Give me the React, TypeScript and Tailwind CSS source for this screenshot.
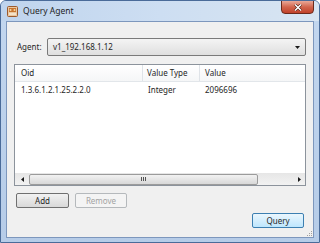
import React from "react";

const font = { fontFamily: '"Noto Sans", "Open Sans", sans-serif' };

function TitleIcon() {
    return (
        <svg width="11" height="11" viewBox="0 0 11 11" className="mt-[5px] ml-[6px]">
            <rect x="0.5" y="0.5" width="10" height="10" rx="1" fill="#e9c7a0" stroke="#9c5a2c" />
            <rect x="2" y="2" width="7" height="4" fill="#c8742e" />
            <rect x="2" y="7" width="7" height="2" fill="#f4e2c8" />
            <circle cx="3.5" cy="4" r="1" fill="#f7d9a8" />
            <circle cx="7.5" cy="4" r="1" fill="#f7d9a8" />
        </svg>
    );
}

function Arrow({dir}: {dir: "left" | "right" | "down"}) {
    if (dir === "down") {
        return (
            <svg width="5" height="3" viewBox="0 0 5 3">
                <path d="M0 0H5L2.5 3Z" fill="#1a1a1a" />
            </svg>
        );
    }
    return (
        <svg width="3" height="5" viewBox="0 0 3 5">
            <path d={dir === "left" ? "M3 0V5L0 2.5Z" : "M0 0V5L3 2.5Z"} fill="#1a1a1a" />
        </svg>
    );
}

export default function App() {
    return (
        <div style={font} className="w-[320px] h-[243px] flex flex-col overflow-hidden rounded-t-[6px] border border-[#4a6b99] bg-gradient-to-b from-[#c3d7ef] to-[#b6cce8] text-[8px] leading-none text-[#262626]">
            <div className="h-[20px] flex items-start bg-gradient-to-r from-[#bfd4ed] via-[#cddef2] to-[#d8e5f2]">
                <TitleIcon />
                <span className="ml-[5px] mt-[6px] text-[8.5px] text-[#1e1e1e]">Query Agent</span>
                <div className="ml-auto mr-[5px] w-[33px] h-[14px] -mt-[1px] rounded-b-[4px] border border-[#6b2a1c] bg-gradient-to-b from-[#e9a898] via-[#d2654d] to-[#c1412a] flex items-center justify-center">
                    <svg width="8" height="7" viewBox="0 0 8 7">
                        <path d="M1 0.5L7 6.5M7 0.5L1 6.5" stroke="#4a1a10" strokeWidth="2.6" />
                        <path d="M1 0.5L7 6.5M7 0.5L1 6.5" stroke="#ffffff" strokeWidth="1.5" />
                    </svg>
                </div>
            </div>

            <div className="mx-[5px] mb-[4px] flex-1 border border-[#7d97bd] bg-[#f0f0f0] flex flex-col px-[7px] pt-[16px] relative">
                <div className="h-[18px] flex items-center">
                    <span className="ml-[3px] w-[30px]">Agent:</span>
                    <div className="flex-1 h-[18px] rounded-[2px] border border-[#7a7a7a] bg-gradient-to-b from-[#f4f4f4] to-[#dfdfdf] flex items-center pl-[5px] pr-[5px]">
                        <span>v1_192.168.1.12</span>
                        <span className="ml-auto flex"><Arrow dir="down" /></span>
                    </div>
                </div>

                <div className="mt-[8px] h-[122px] border border-[#8c939c] bg-white flex flex-col">
                    <div className="h-[17px] flex items-center border-b border-[#e2e6ea] bg-gradient-to-b from-white to-[#f5f6f7]">
                        <div className="w-[128px] h-full flex items-center pl-[6px] border-r border-[#dfe3e8]">Oid</div>
                        <div className="w-[57px] h-full flex items-center pl-[4px] border-r border-[#dfe3e8]">Value Type</div>
                        <div className="flex-1 h-full flex items-center pl-[5px]">Value</div>
                    </div>
                    <div className="h-[15px] flex items-center">
                        <div className="w-[128px] pl-[6px]">1.3.6.1.2.1.25.2.2.0</div>
                        <div className="w-[57px] pl-[5px]">Integer</div>
                        <div className="flex-1 pl-[5px]">2096696</div>
                    </div>
                    <div className="flex-1" />
                    <div className="h-[12px] flex items-center bg-gradient-to-b from-[#e6e6e6] to-[#f2f2f2]">
                        <div className="w-[14px] flex justify-center"><Arrow dir="left" /></div>
                        <div className="w-[229px] h-[11px] rounded-[2px] border border-[#9b9b9b] bg-gradient-to-b from-[#f2f2f2] to-[#d8d8d8] flex items-center justify-center">
                            <div className="flex gap-[1px]">
                                <div className="w-[1px] h-[4px] bg-[#555]" />
                                <div className="w-[1px] h-[4px] bg-[#555]" />
                                <div className="w-[1px] h-[4px] bg-[#555]" />
                            </div>
                        </div>
                        <div className="flex-1" />
                        <div className="w-[12px] flex justify-center"><Arrow dir="right" /></div>
                    </div>
                </div>

                <div className="mt-[7px] ml-[2px] flex gap-[6px]">
                    <button className="w-[53px] h-[15px] rounded-[2px] border border-[#707070] bg-gradient-to-b from-[#f2f2f2] to-[#d9d9d9] text-[8px] leading-none">Add</button>
                    <button className="w-[52px] h-[15px] rounded-[2px] border border-[#b5b9bc] bg-[#f4f4f4] text-[8px] leading-none text-[#a3a3a3]">Remove</button>
                </div>

                <div className="mt-[5px] mr-[2px] flex justify-end">
                    <button className="w-[52px] h-[15px] rounded-[2px] border border-[#3c7fb1] bg-gradient-to-b from-[#eaf6fd] to-[#bee6fd] text-[8px] leading-none">Query</button>
                </div>

                <div className="absolute right-[1px] bottom-[1px] grid grid-cols-3 gap-[1px]">
                    <div className="w-[1px] h-[1px]" />
                    <div className="w-[1px] h-[1px]" />
                    <div className="w-[1px] h-[1px] bg-[#a0a0a0]" />
                    <div className="w-[1px] h-[1px]" />
                    <div className="w-[1px] h-[1px] bg-[#a0a0a0]" />
                    <div className="w-[1px] h-[1px] bg-[#a0a0a0]" />
                    <div className="w-[1px] h-[1px] bg-[#a0a0a0]" />
                    <div className="w-[1px] h-[1px] bg-[#a0a0a0]" />
                    <div className="w-[1px] h-[1px] bg-[#a0a0a0]" />
                </div>
            </div>
        </div>
    );
}
